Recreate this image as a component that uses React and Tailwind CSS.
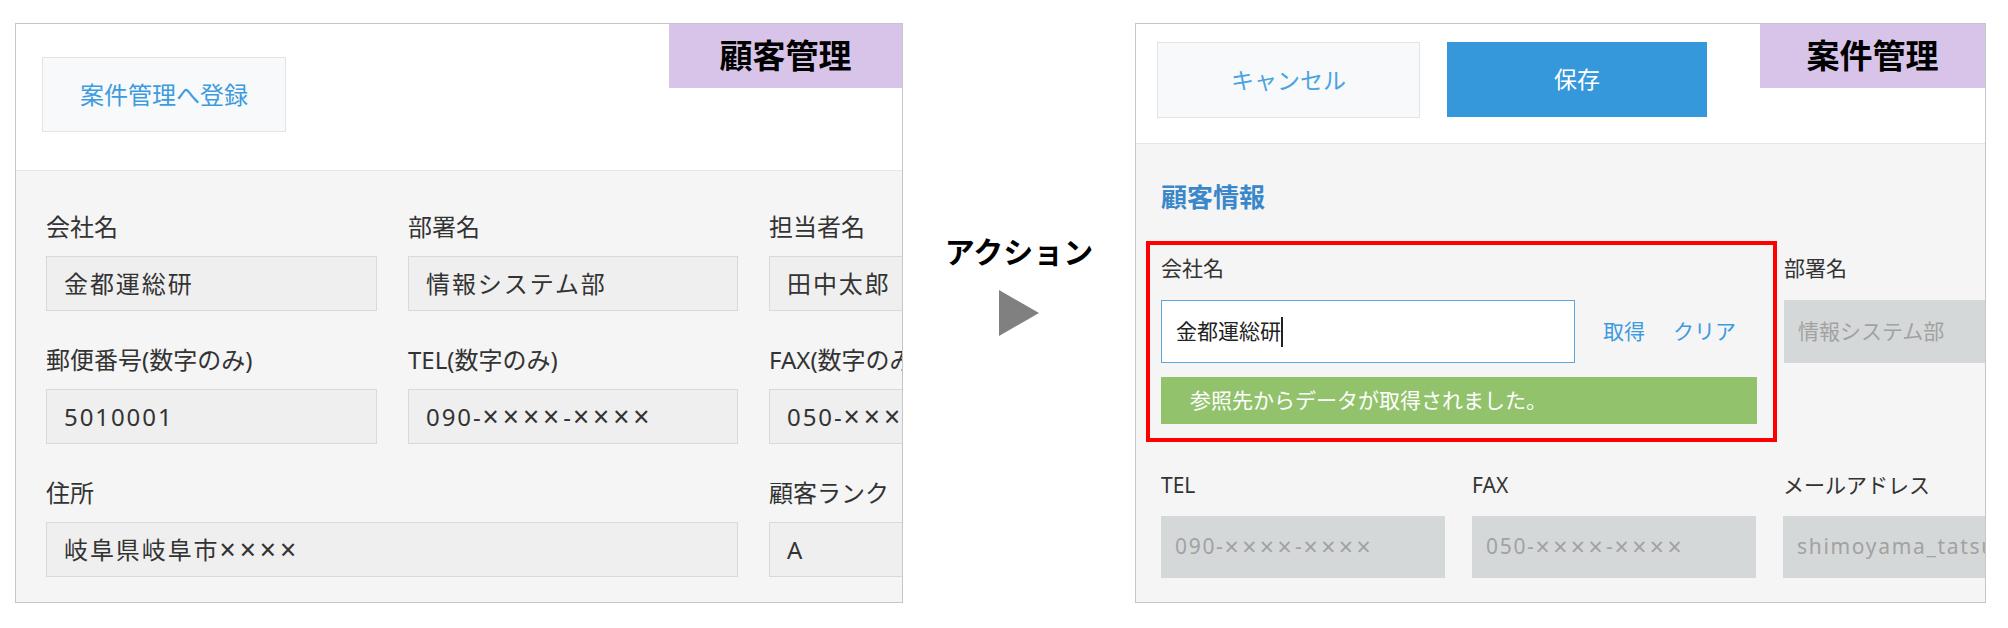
import React from 'react';

const jp = { fontFamily: '"Noto Sans", "Noto Sans CJK JP", sans-serif' };

// × marks in the reference are larger and wider spaced than the latin glyph
const Masked = ({ text }) =>
  text.split(/(×+)/).map((part, i) =>
    part.startsWith('×') ? (
      <span key={i} className="text-[1.18em] leading-none tracking-[0.14em]">{part}</span>
    ) : (
      <span key={i} className="tracking-[0.08em]">{part}</span>
    )
  );

// left panel (顧客管理) field
const Field = ({ label, value, className = '' }) => (
  <div className={className}>
    <div className="h-[26px] text-[24px] leading-[26px] text-[#333] whitespace-nowrap">{label}</div>
    <div className="mt-[16px] h-[55px] border border-[#d9d9d9] bg-[#efefef] pl-[17px] flex items-center text-[24px] text-[#333] whitespace-nowrap">
      <Masked text={value} />
    </div>
  </div>
);

// right panel (案件管理) disabled field
const DisabledField = ({ label, value }) => (
  <div className="w-[284px] shrink-0">
    <div className="h-[28px] text-[21px] leading-[28px] text-[#333] whitespace-nowrap">{label}</div>
    <div className="mt-[17px] h-[62px] bg-[#d5d8d9] pl-[14px] flex items-center text-[21px] text-[#a2a2a2] whitespace-nowrap overflow-hidden">
      <Masked text={value} />
    </div>
  </div>
);

const CustomerPanel = () => (
  <div className="w-[888px] h-[580px] shrink-0 border border-[#c6c6c6] overflow-hidden flex flex-col">
    <div className="relative h-[147px] bg-white border-b border-[#e6e6e6] shrink-0">
      <button className="ml-[26px] mt-[33px] w-[244px] h-[75px] bg-[#f7f9fa] border border-[#e1e5e8] text-[#3d9be0] text-[24px]">
        案件管理へ登録
      </button>
      <div className="absolute top-0 right-0 w-[233px] h-[64px] bg-[#d9c4e9] flex items-center justify-center text-[33px] font-bold text-black">
        顧客管理
      </div>
    </div>
    <div className="flex-1 bg-[#f5f5f5] pt-[43px] pl-[30px]">
      <div className="grid grid-cols-[331px_330px_331px] gap-x-[31px] gap-y-[36px]">
        <Field label="会社名" value="金都運総研" />
        <Field label="部署名" value="情報システム部" />
        <Field label="担当者名" value="田中太郎" />
        <Field label="郵便番号(数字のみ)" value="5010001" />
        <Field label="TEL(数字のみ)" value="090-××××-××××" />
        <Field label="FAX(数字のみ)" value="050-××××-××××" />
        <Field label="住所" value="岐阜県岐阜市××××" className="col-span-2" />
        <Field label="顧客ランク" value="A" />
      </div>
    </div>
  </div>
);

const ProjectPanel = () => (
  <div className="w-[851px] h-[580px] shrink-0 border border-[#c6c6c6] overflow-hidden flex flex-col">
    <div className="relative h-[120px] bg-white border-b border-[#e6e6e6] shrink-0 flex items-start gap-[27px] pl-[21px] pt-[18px]">
      <button className="w-[263px] h-[76px] bg-[#f7f9fa] border border-[#e1e5e8] text-[#4aa3df] text-[23px]">
        キャンセル
      </button>
      <button className="w-[260px] h-[75px] bg-[#3498db] text-white text-[23px]">保存</button>
      <div className="absolute top-0 right-0 w-[225px] h-[64px] bg-[#d9c4e9] flex items-center justify-center text-[33px] font-bold text-black">
        案件管理
      </div>
    </div>
    <div className="flex-1 bg-[#f5f5f5] pl-[10px] pt-[37px]">
      <div className="ml-[15px] h-[32px] text-[26px] leading-[32px] font-bold text-[#3a87c9]">顧客情報</div>
      <div className="mt-[28px] flex items-start">
        <div className="w-[631px] h-[201px] shrink-0 border-[4px] border-[#ff0000] pl-[11px] pt-[9px]">
          <div className="h-[28px] text-[21px] leading-[28px] text-[#333]">会社名</div>
          <div className="mt-[18px] flex items-center">
            <div className="w-[414px] h-[63px] bg-white border border-[#5aa7e2] pl-[14px] flex items-center text-[21px] text-[#222]">
              金都運総研<span className="inline-block w-[2px] h-[30px] bg-[#222]" />
            </div>
            <span className="ml-[28px] text-[21px] text-[#3d9be0]">取得</span>
            <span className="ml-[28px] text-[21px] text-[#3d9be0]">クリア</span>
          </div>
          <div className="mt-[14px] w-[596px] h-[47px] bg-[#92c36c] pl-[29px] flex items-center text-[21px] text-white">
            参照先からデータが取得されました。
          </div>
        </div>
        <div className="ml-[7px] pt-[13px] w-[284px] shrink-0">
          <div className="h-[28px] text-[21px] leading-[28px] text-[#333]">部署名</div>
          <div className="mt-[18px] h-[63px] bg-[#d5d8d9] pl-[14px] flex items-center text-[21px] text-[#a2a2a2] whitespace-nowrap">
            情報システム部
          </div>
        </div>
      </div>
      <div className="mt-[29px] ml-[15px] flex gap-[27px]">
        <DisabledField label="TEL" value="090-××××-××××" />
        <DisabledField label="FAX" value="050-××××-××××" />
        <DisabledField label="メールアドレス" value="shimoyama_tatsuya@example.jp" />
      </div>
    </div>
  </div>
);

export default function App() {
  return (
    <div className="w-[2008px] h-[628px] bg-white flex items-start pt-[23px] pl-[15px]" style={jp}>
      <CustomerPanel />
      <div className="w-[232px] shrink-0 flex flex-col items-center pt-[211px]">
        <div className="text-[30px] leading-[36px] font-bold text-black">アクション</div>
        <svg className="mt-[20px]" width="40" height="46" viewBox="0 0 40 46">
          <polygon points="0,0 40,23 0,46" fill="#808080" />
        </svg>
      </div>
      <ProjectPanel />
    </div>
  );
}
